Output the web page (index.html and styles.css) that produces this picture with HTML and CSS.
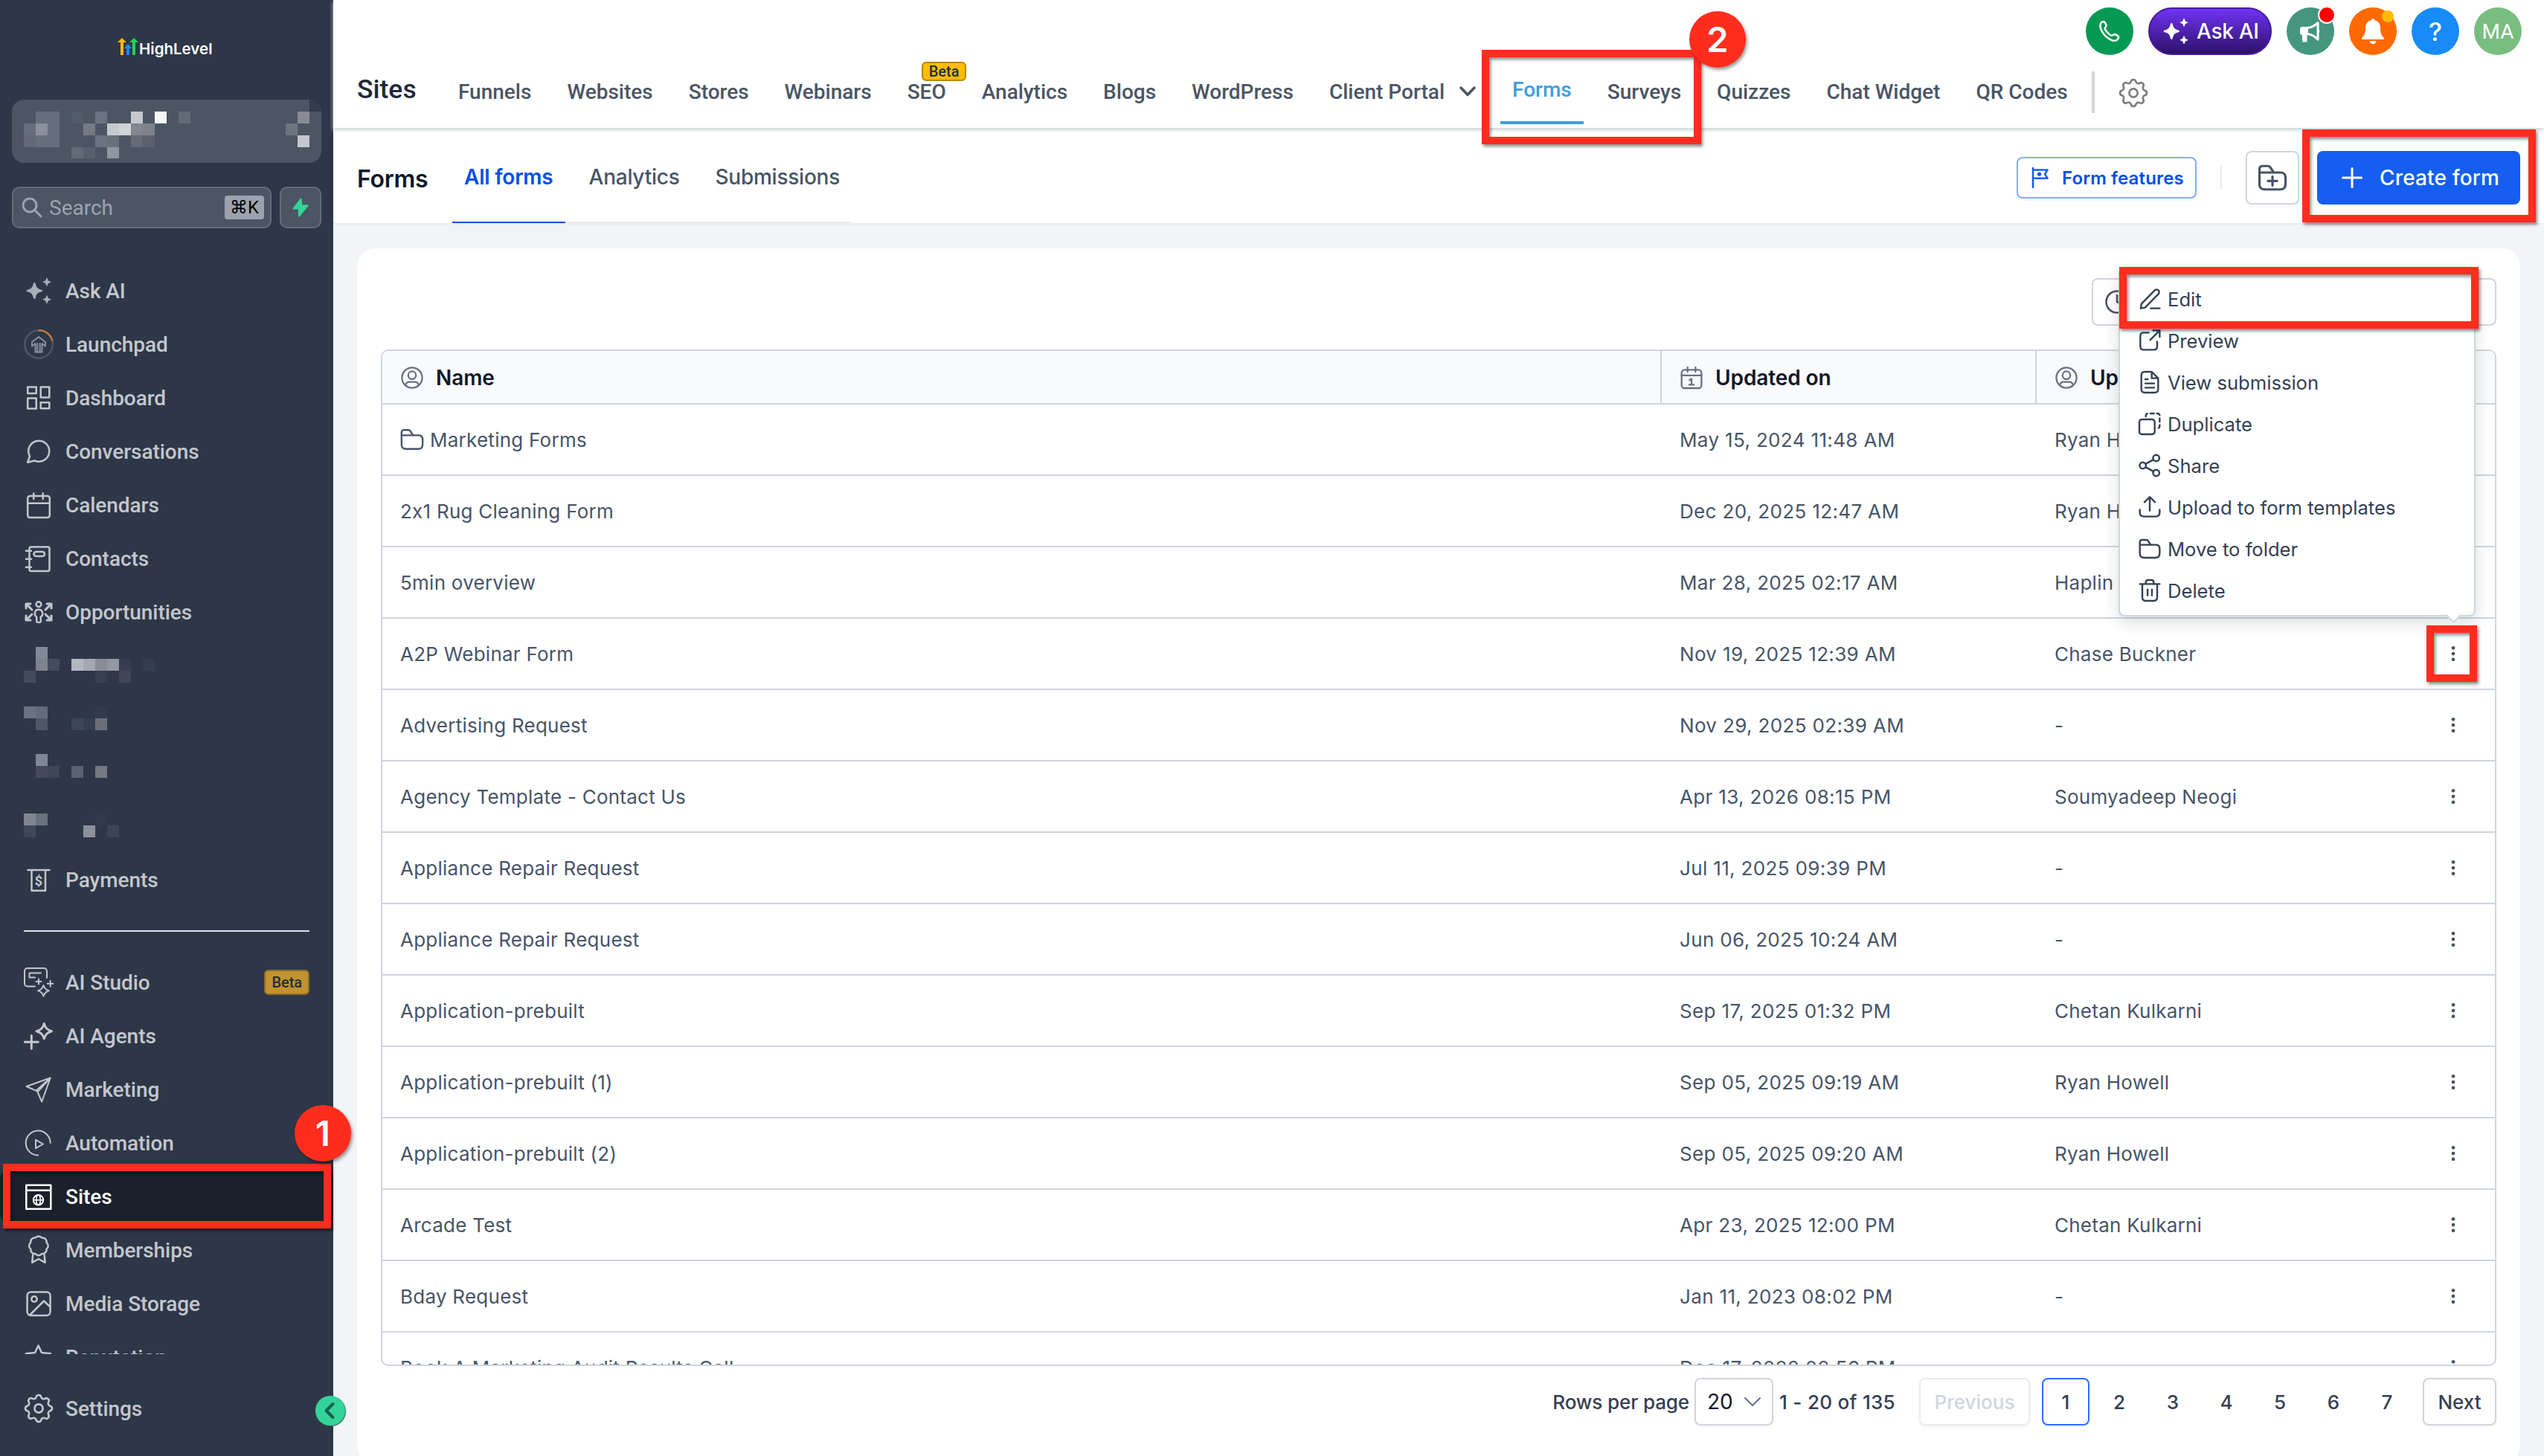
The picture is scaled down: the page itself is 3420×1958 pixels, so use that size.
FILE: index.html
```html
<!DOCTYPE html>
<html lang="en">
<head>
    <meta charset="UTF-8">
    <meta name="viewport" content="width=device-width, initial-scale=1.0">
    <title>Sites - Forms</title>
    <link rel="stylesheet" href="styles.css">
</head>
<body>
    <!-- Shared icons -->
    <svg class="icon-defs" width="0" height="0">
        <symbol id="i-gear" viewBox="0 0 24 24"><path d="M10.325 4.317c.426-1.756 2.924-1.756 3.35 0a1.724 1.724 0 002.573 1.066c1.543-.94 3.31.826 2.37 2.37a1.724 1.724 0 001.065 2.572c1.756.426 1.756 2.924 0 3.35a1.724 1.724 0 00-1.066 2.573c.94 1.543-.826 3.31-2.37 2.37a1.724 1.724 0 00-2.572 1.065c-.426 1.756-2.924 1.756-3.35 0a1.724 1.724 0 00-2.573-1.066c-1.543.94-3.31-.826-2.37-2.37a1.724 1.724 0 00-1.065-2.572c-1.756-.426-1.756-2.924 0-3.35a1.724 1.724 0 001.066-2.573c-.94-1.543.826-3.31 2.37-2.37.996.608 2.296.07 2.572-1.065z"/><circle cx="12" cy="12" r="2.8"/></symbol>
        <path id="i-star" d="M14.300 9c1 0 1.300.8 1.600 2 .9 4 2.600 6.300 7 7.400 1.300.3 2.100.6 2.100 1.600s-.8 1.300-2.100 1.600c-4.400 1.100-6.100 3.400-7 7.400-.3 1.200-.6 2-1.600 2s-1.300-.8-1.600-2c-.9-4-2.600-6.300-7-7.400-1.300-.3-2.100-.6-2.100-1.600s.8-1.300 2.100-1.600c4.400-1.100 6.100-3.400 7-7.400.3-1.200.6-2 1.600-2z"/>
        <symbol id="i-sparkles" viewBox="0 0 40 40">
            <use href="#i-star"/>
            <use href="#i-star" transform="translate(23.850 -1.700) scale(.5)"/>
            <use href="#i-star" transform="translate(23.850 21.700) scale(.5)"/>
        </symbol>
        <symbol id="i-folder" viewBox="0 0 24 24"><path d="M2 7.500V5.200A2.200 2.200 0 0 1 4.200 3h4.200c.9 0 1.600.4 2 1.200L13 8M2 8h15.800c1.500 0 2.300.2 3 .8.900.7 1.200 1.600 1.200 3.200v4.500c0 1.800-.3 2.800-1.100 3.500-.7.700-1.700 1-3.400 1H6.500c-1.700 0-2.700-.3-3.400-1C2.300 19.300 2 18.300 2 16.500z"/></symbol>
        <symbol id="i-user" viewBox="0 0 24 24"><circle cx="12" cy="12" r="10.200"/><circle cx="12" cy="9.500" r="3.900"/><path d="M5.300 19.300c.6-2 1.900-3.100 3.900-3.100h5.600c2 0 3.300 1.100 3.900 3.100"/></symbol>
        <symbol id="i-dots" viewBox="0 0 24 24"><circle cx="12" cy="5.800" r="1.900"/><circle cx="12" cy="12" r="1.900"/><circle cx="12" cy="18.200" r="1.900"/></symbol>
    </svg>

    <div class="app">
        <aside class="sidebar">
            <div class="logo">
                <svg width="28" height="24" viewBox="0 0 28 24">
                    <path fill="#ffbc00" d="M6 0l6 6H8v17H4V6H0z"/>
                    <path fill="#188bf6" d="M14 8l5.500 6H16v9h-4v-9H8.500z"/>
                    <path fill="#22d34f" d="M22 0l6 6h-4v17h-4V6h-4z"/>
                </svg>
                <span>HighLevel</span>
            </div>

            <!-- Account switcher, name obscured -->
            <div class="account">
                <svg width="416" height="85" viewBox="0 0 416 85">
                    <path fill="#333c4f" d="M400 0h16v16h-16z"/>
                    <g transform="translate(-16 0)">
                        <path fill="#666d7b" d="M48 16h32v48H32V32h16z"/>
                        <rect x="32" y="48" width="16" height="16" fill="#626875"/>
                        <rect x="48" y="32" width="16" height="16" fill="#8a919c"/>
                        <rect x="96" y="16" width="16" height="16" fill="#515c68"/>
                        <rect x="128" y="16" width="16" height="16" fill="#6b7380"/>
                        <rect x="176" y="16" width="16" height="16" fill="#c6c7cd"/>
                        <rect x="208" y="16" width="16" height="16" fill="#f5f6f8"/>
                        <rect x="240" y="16" width="16" height="16" fill="#646b77"/>
                        <rect x="400" y="16" width="16" height="16" fill="#868b93"/>
                        <rect x="112" y="32" width="16" height="16" fill="#767a82"/>
                        <rect x="144" y="32" width="16" height="16" fill="#c6c8cd"/>
                        <rect x="160" y="32" width="16" height="16" fill="#d0d2d5"/>
                        <rect x="176" y="32" width="16" height="16" fill="#84868f"/>
                        <rect x="192" y="32" width="16" height="16" fill="#7c848a"/>
                        <rect x="384" y="32" width="16" height="16" fill="#6d757e"/>
                        <rect x="128" y="48" width="16" height="16" fill="#6b7380"/>
                        <rect x="144" y="48" width="16" height="16" fill="#676f7b"/>
                        <rect x="176" y="48" width="16" height="16" fill="#636975"/>
                        <rect x="192" y="48" width="16" height="16" fill="#5a616d"/>
                        <rect x="400" y="48" width="16" height="16" fill="#c5c7cd"/>
                        <rect x="96" y="64" width="16" height="15" fill="#636975"/>
                        <rect x="112" y="64" width="16" height="15" fill="#585f6d"/>
                        <rect x="144" y="64" width="16" height="15" fill="#8f979f"/>
                    </g>
                </svg>
            </div>

            <div class="search-row">
                <div class="search">
                    <svg class="search-icon" width="28" height="28" viewBox="0 0 28 28"><circle cx="11" cy="11" r="9"/><path d="M17.500 17.500L26 26"/></svg>
                    <span class="search-label">Search</span>
                    <span class="kbd">⌘K</span>
                </div>
                <div class="bolt">
                    <svg width="22" height="26" viewBox="0 0 22 26"><path fill="#34d399" stroke="#34d399" stroke-width="2" stroke-linejoin="round" d="M11.500 1.500L1.500 14.500h7.500L9 24.500 20.500 10.500h-8z"/></svg>
                </div>
            </div>

            <nav class="menu">
                <a class="menu-item"><svg class="ic fill dim"><use href="#i-sparkles"/></svg>Ask AI</a>
                <a class="menu-item"><svg class="ic" viewBox="0 0 40 40"><circle cx="20" cy="20" r="18.700" stroke="#4b5563"/><path stroke="#c0763a" d="M20 1.300A18.700 18.700 0 0 1 38.300 14.500"/><path stroke="#8a919d" stroke-width="2" d="M20 10l9 7v5.500L24.500 19v11.500h-9V19L11 22.500V17zM18.300 19v11M21.700 19v11"/></svg>Launchpad</a>
                <a class="menu-item"><svg class="ic" viewBox="0 0 40 40"><path d="M5.200 5.600h11.600v8.400H5.200zM22.700 5.600h11.600v14H22.700zM5.200 20.600h11.600v13.800H5.200zM22.700 26.300h11.600v8H22.700z"/></svg>Dashboard</a>
                <a class="menu-item"><svg class="ic" viewBox="0 0 40 40"><path d="M8 26.500A14 14 0 1 1 14.500 32.500L5.200 34.700z"/></svg>Conversations</a>
                <a class="menu-item"><svg class="ic" viewBox="0 0 40 40"><rect x="5.200" y="8" width="29.600" height="29" rx="3"/><path d="M5 17.700h30M13.300 4.500v7.500M25.700 4.500v7.500"/></svg>Calendars</a>
                <a class="menu-item"><svg class="ic" viewBox="0 0 40 40"><rect x="7.500" y="4.500" width="27" height="32.500" rx="2.500"/><path d="M3 9.700h7M3 20.700h7M3 31.700h7"/><rect x="13.500" y="11" width="14.500" height="6" rx="3"/></svg>Contacts</a>
                <a class="menu-item"><svg class="ic" viewBox="0 0 40 40"><circle cx="20" cy="9.700" r="3.400"/><path d="M17.200 33V26.500c-2-1-2.600-3-2.400-5.200.3-2.800 2.200-4.500 5.200-4.500s4.900 1.700 5.200 4.500c.2 2.200-.4 4.200-2.400 5.200V33c0 1.200-5.600 1.200-5.600 0z"/><path d="M11 17L4 10M3 15V9h6M29 17l7-7M37 15V9h-6M11 23l-7 7M3 25v6h6M29 23l7 7M37 25v6h-6" stroke-width="3"/></svg>Opportunities</a>

                <!-- Obscured entries -->
                <svg class="masked" width="448" height="288" viewBox="0 859 448 288">
                    <rect x="48" y="870" width="16" height="16" fill="#828a97"/>
                    <rect x="48" y="886" width="16" height="16" fill="#7c828e"/>
                    <rect x="64" y="886" width="16" height="16" fill="#434c5c"/>
                    <rect x="96" y="886" width="16" height="16" fill="#b3b6c0"/>
                    <rect x="112" y="886" width="16" height="16" fill="#a4a8b1"/>
                    <rect x="128" y="886" width="16" height="16" fill="#888c94"/>
                    <rect x="144" y="886" width="16" height="16" fill="#94979f"/>
                    <rect x="160" y="886" width="16" height="16" fill="#353e50"/>
                    <rect x="192" y="886" width="16" height="16" fill="#343d4f"/>
                    <rect x="32" y="902" width="16" height="16" fill="#434c5b"/>
                    <rect x="128" y="902" width="16" height="16" fill="#37404f"/>
                    <rect x="160" y="902" width="16" height="16" fill="#3f4555"/>
                    <rect x="32" y="950" width="16" height="16" fill="#6b7280"/>
                    <rect x="48" y="950" width="16" height="16" fill="#646b78"/>
                    <rect x="128" y="950" width="16" height="16" fill="#323b4d"/>
                    <rect x="48" y="966" width="16" height="16" fill="#4f5664"/>
                    <rect x="96" y="966" width="16" height="16" fill="#3d4658"/>
                    <rect x="112" y="966" width="16" height="16" fill="#323f50"/>
                    <rect x="128" y="966" width="16" height="16" fill="#6b6e79"/>
                    <rect x="48" y="1014" width="16" height="16" fill="#808895"/>
                    <rect x="48" y="1030" width="16" height="16" fill="#444a5b"/>
                    <rect x="64" y="1030" width="16" height="16" fill="#3e4756"/>
                    <rect x="96" y="1030" width="16" height="16" fill="#5a6170"/>
                    <rect x="128" y="1030" width="16" height="16" fill="#71787f"/>
                    <rect x="32" y="1094" width="16" height="16" fill="#808691"/>
                    <rect x="48" y="1094" width="16" height="16" fill="#67727d"/>
                    <rect x="128" y="1094" width="16" height="16" fill="#313a4c"/>
                    <rect x="32" y="1110" width="16" height="16" fill="#3f4858"/>
                    <rect x="112" y="1110" width="16" height="16" fill="#8c9099"/>
                    <rect x="144" y="1110" width="16" height="16" fill="#3c4456"/>
                </svg>

                <a class="menu-item"><svg class="ic" viewBox="0 0 40 40"><path d="M5.500 7h29M10.500 7v27.700h18.500V7"/><text class="dollar" x="19.800" y="28" text-anchor="middle">$</text></svg>Payments</a>
                <hr class="divider">
                <a class="menu-item"><svg class="ic thin" viewBox="0 0 40 40"><path d="M15 25.500H5a4 4 0 0 1-4-4V5a4 4 0 0 1 4-4h22a4 4 0 0 1 4 4v9M23 7.500H7.500v6H15M20 15.500v7M16.500 19h7M35.700 17.700v8M31.700 21.700h8M26.500 24c1.300 4.300 3 6 7.300 7.300-4.300 1.300-6 3-7.300 7.300-1.300-4.300-3-6-7.300-7.300 4.300-1.300 6-3 7.300-7.300z"/></svg>AI Studio<span class="beta beta-dim">Beta</span></a>
                <a class="menu-item"><svg class="ic" viewBox="0 0 40 40"><path d="M27.300 3.500c1.800 6.100 4.100 8.400 10.200 10.200-6.100 1.800-8.400 4.100-10.200 10.200-1.800-6.100-4.100-8.400-10.200-10.200 6.100-1.800 8.400-4.100 10.200-10.200zM10.300 19.500v17.800M1.300 28.300h18" stroke-width="3"/></svg>AI Agents</a>
                <a class="menu-item"><svg class="ic" viewBox="0 0 40 40"><path stroke-width="2" d="M35.700 4.500L3.500 16 18 22.300l6.200 14.200zM35.700 4.500L17.300 21M35.700 4.500L19.300 22.500"/></svg>Marketing</a>
                <a class="menu-item"><svg class="ic thin" viewBox="0 0 40 40"><path d="M35.700 19.700A16.500 16.500 0 1 0 19.300 36.600"/><path d="M16 15.800v11.400L26 21.500z"/></svg>Automation</a>
                <a class="menu-item active"><svg class="ic" viewBox="0 0 40 40"><path d="M3.300 4.700h33v32h-33zM3.300 11.700h33"/><circle cx="19.500" cy="24.700" r="6.700" stroke-width="2"/><ellipse cx="19.500" cy="24.700" rx="2.800" ry="6.700" stroke-width="1.600"/><path stroke-width="1.600" d="M13 24.700h13"/></svg>Sites</a>
                <a class="menu-item"><svg class="ic" viewBox="0 0 40 40"><path d="M30.600 9.900A5.600 5.600 0 0 1 30.600 18.700A5.600 5.600 0 0 1 24.300 25A5.600 5.600 0 0 1 15.500 25A5.600 5.600 0 0 1 9.200 18.700A5.600 5.600 0 0 1 9.200 9.900A5.600 5.600 0 0 1 15.500 3.600A5.600 5.600 0 0 1 24.300 3.600A5.600 5.600 0 0 1 30.600 9.900z"/><path d="M12.200 26.500L11.200 36.800 19.900 32l8.700 4.800-1-10.300"/></svg>Memberships</a>
                <a class="menu-item"><svg class="ic" viewBox="0 0 40 40"><rect x="4.600" y="4.500" width="31" height="31.500" rx="5"/><circle cx="14" cy="14" r="3.700"/><path d="M8.500 35L27 16.500l8.500 8"/></svg>Media Storage</a>
                <a class="menu-item"><svg class="ic" viewBox="0 0 40 40"><path d="M19.500 4.500L24 14l12 1.200-9 8 2.600 12-10.100-6.200-10.100 6.200 2.600-12-9-8L15 14z"/></svg>Reputation</a>
            </nav>

            <a class="menu-item settings"><svg class="ic gear"><use href="#i-gear"/></svg>Settings</a>
            <button class="collapse"><svg width="16" height="24" viewBox="0 0 16 24"><path d="M12.500 3L3.500 12l9 9"/></svg></button>
        </aside>

        <main class="main">
            <header class="topbar">
                <h1 class="topbar-title">Sites</h1>
                <nav class="topnav">
                    <a>Funnels</a>
                    <a>Websites</a>
                    <a>Stores</a>
                    <a>Webinars</a>
                    <a class="has-badge">SEO<span class="beta">Beta</span></a>
                    <a>Analytics</a>
                    <a>Blogs</a>
                    <a>WordPress</a>
                    <a>Client Portal<svg class="chev" width="24" height="16" viewBox="0 0 24 16"><path d="M3 3l9 9.500L21 3"/></svg></a>
                    <a class="current">Forms</a>
                    <a>Surveys</a>
                    <a>Quizzes</a>
                    <a>Chat Widget</a>
                    <a>QR Codes</a>
                </nav>
                <span class="topnav-sep"></span>
                <svg class="topnav-gear"><use href="#i-gear"/></svg>

                <div class="actions">
                    <span class="round phone"><svg width="32" height="32" viewBox="0 0 32 32"><path d="M4.500 4.800c1-1.200 2-2.100 3.500-1.800 1.800.4 3 3.500 3.500 5 .5 1.800-1.600 2.700-1.800 4.200-.2 2.200 6.200 9.300 9 9.600 1.700.2 2.800-2 4.600-1.500 1.500.5 4.500 2.200 4.800 3.800.3 1.500-1 2.700-2.200 3.600-2.500 1.700-6.500.8-9-.6C10.500 23.500 6 18 4 12.300c-.8-2.500-1-5.300.5-7.500z"/></svg></span>
                    <span class="ask-ai"><svg width="40" height="40"><use href="#i-sparkles"/></svg>Ask AI</span>
                    <span class="round mega"><svg width="32" height="32" viewBox="0 0 32 32"><path fill="#fff" d="M5 10h8v11h-1.500v8a1.500 1.500 0 0 1-1.500 1.500H6.500A1.500 1.500 0 0 1 5 29v-8a3 3 0 0 1-3-3v-5a3 3 0 0 1 3-3z"/><path fill="none" stroke="#fff" stroke-width="3" stroke-linejoin="round" d="M12.500 11.300C18 11 22.500 8 26 4.500v22.800C22.500 23.500 18 20.300 12.500 19.800"/><path fill="#fff" d="M26 12.500c3 .5 3 6 0 6.500z"/></svg><i class="dot dot-red"></i></span>
                    <span class="round bell"><svg width="32" height="36" viewBox="0 0 32 36"><path fill="#fff" d="M16 1a2.500 2.500 0 0 1 2.500 2.300c4.500 1.200 7.500 5 7.500 9.700 0 6.500 1 10.500 4.500 13.500.9.800.6 2.500-.8 2.500H2.300c-1.400 0-1.700-1.700-.8-2.500C5 23.500 6 19.500 6 13c0-4.700 3-8.500 7.500-9.700A2.500 2.500 0 0 1 16 1zM11.500 31h9a4.500 4 0 0 1-9 0z"/></svg><i class="dot dot-yellow"></i></span>
                    <span class="round help">?</span>
                    <span class="round avatar">MA</span>
                </div>
            </header>

            <section class="subbar">
                <h2 class="subbar-title">Forms</h2>
                <div class="tabs">
                    <a class="tab tab-on">All forms</a>
                    <a class="tab">Analytics</a>
                    <a class="tab">Submissions</a>
                </div>
                <div class="subbar-actions">
                    <button class="btn-features"><svg width="24" height="28" viewBox="0 0 24 28"><path fill="none" stroke="#155eef" stroke-width="2.500" d="M2 0v27M2 3.500h19.500l-3.500 5.700 3.500 5.500H2"/><circle cx="10.500" cy="9.200" r="2.700" fill="#155eef"/></svg>Form features</button>
                    <span class="vsep"></span>
                    <button class="btn-folder"><svg width="42" height="42" viewBox="0 0 24 24"><use href="#i-folder"/><path d="M12 11v7M8.500 14.500h7"/></svg></button>
                    <button class="btn-create"><svg width="28" height="28" viewBox="0 0 28 28"><path d="M14 1.500v25M1.500 14h25"/></svg>Create form</button>
                </div>
            </section>

            <section class="card">
                <div class="toolbar">
                    <div class="toolbox"><svg width="34" height="34" viewBox="0 0 34 34"><circle cx="17" cy="17" r="14.500"/><path d="M17 8v9l6 3"/></svg></div>
                </div>

                <div class="table">
                    <div class="row head">
                        <div class="cell"><svg class="hic"><use href="#i-user"/></svg>Name</div>
                        <div class="cell"><svg class="hic" viewBox="0 0 24 24"><rect x="2" y="4" width="20" height="18.500" rx="3"/><path d="M2 9.700h20M8 1.500v4.500M16 1.500v4.500M10 14.300l2-1.200v6M9.700 19.100h4.600"/></svg>Updated on</div>
                        <div class="cell"><svg class="hic"><use href="#i-user"/></svg>Updated by</div>
                        <div class="cell"></div>
                    </div>
                    <div class="row">
                        <div class="cell"><svg class="fic"><use href="#i-folder"/></svg>Marketing Forms</div>
                        <div class="cell date">May 15, 2024 11:48 AM</div><div class="cell">Ryan Howell</div>
                        <div class="cell more"><svg><use href="#i-dots"/></svg></div>
                    </div>
                    <div class="row">
                        <div class="cell">2x1 Rug Cleaning Form</div><div class="cell date">Dec 20, 2025 12:47 AM</div><div class="cell">Ryan Howell</div>
                        <div class="cell more"><svg><use href="#i-dots"/></svg></div>
                    </div>
                    <div class="row">
                        <div class="cell">5min overview</div><div class="cell date">Mar 28, 2025 02:17 AM</div><div class="cell">Haplin</div>
                        <div class="cell more"><svg><use href="#i-dots"/></svg></div>
                    </div>
                    <div class="row">
                        <div class="cell">A2P Webinar Form</div><div class="cell date">Nov 19, 2025 12:39 AM</div><div class="cell">Chase Buckner</div>
                        <div class="cell more"><svg><use href="#i-dots"/></svg></div>
                    </div>
                    <div class="row">
                        <div class="cell">Advertising Request</div><div class="cell date">Nov 29, 2025 02:39 AM</div><div class="cell">-</div>
                        <div class="cell more"><svg><use href="#i-dots"/></svg></div>
                    </div>
                    <div class="row">
                        <div class="cell">Agency Template - Contact Us</div><div class="cell date">Apr 13, 2026 08:15 PM</div><div class="cell">Soumyadeep Neogi</div>
                        <div class="cell more"><svg><use href="#i-dots"/></svg></div>
                    </div>
                    <div class="row">
                        <div class="cell">Appliance Repair Request</div><div class="cell date">Jul 11, 2025 09:39 PM</div><div class="cell">-</div>
                        <div class="cell more"><svg><use href="#i-dots"/></svg></div>
                    </div>
                    <div class="row">
                        <div class="cell">Appliance Repair Request</div><div class="cell date">Jun 06, 2025 10:24 AM</div><div class="cell">-</div>
                        <div class="cell more"><svg><use href="#i-dots"/></svg></div>
                    </div>
                    <div class="row">
                        <div class="cell">Application-prebuilt</div><div class="cell date">Sep 17, 2025 01:32 PM</div><div class="cell">Chetan Kulkarni</div>
                        <div class="cell more"><svg><use href="#i-dots"/></svg></div>
                    </div>
                    <div class="row">
                        <div class="cell">Application-prebuilt (1)</div><div class="cell date">Sep 05, 2025 09:19 AM</div><div class="cell">Ryan Howell</div>
                        <div class="cell more"><svg><use href="#i-dots"/></svg></div>
                    </div>
                    <div class="row">
                        <div class="cell">Application-prebuilt (2)</div><div class="cell date">Sep 05, 2025 09:20 AM</div><div class="cell">Ryan Howell</div>
                        <div class="cell more"><svg><use href="#i-dots"/></svg></div>
                    </div>
                    <div class="row">
                        <div class="cell">Arcade Test</div><div class="cell date">Apr 23, 2025 12:00 PM</div><div class="cell">Chetan Kulkarni</div>
                        <div class="cell more"><svg><use href="#i-dots"/></svg></div>
                    </div>
                    <div class="row">
                        <div class="cell">Bday Request</div><div class="cell date">Jan 11, 2023 08:02 PM</div><div class="cell">-</div>
                        <div class="cell more"><svg><use href="#i-dots"/></svg></div>
                    </div>
                    <div class="row">
                        <div class="cell">Book A Marketing Audit Results Call</div><div class="cell date">Dec 17, 2022 02:56 PM</div><div class="cell">-</div>
                        <div class="cell more"><svg><use href="#i-dots"/></svg></div>
                    </div>
                </div>

                <div class="pager">
                    <span class="pager-label">Rows per page</span>
                    <span class="page-size">20<svg width="24" height="16" viewBox="0 0 24 16"><path d="M2 3l10 10L22 3"/></svg></span>
                    <span class="range">1 - 20 of 135</span>
                    <button class="pg prev">Previous</button>
                    <button class="num on">1</button>
                    <button class="num">2</button>
                    <button class="num">3</button>
                    <button class="num">4</button>
                    <button class="num">5</button>
                    <button class="num">6</button>
                    <button class="num">7</button>
                    <button class="pg next">Next</button>
                </div>
            </section>
        </main>
    </div>

    <!-- Row actions popover -->
    <div class="popover">
        <a><svg viewBox="0 0 24 24"><path d="M13 21.500h9M3 21.500l.6-4.500L17 3.300a2.600 2.600 0 0 1 3.700 3.700L7.300 20.700z"/></svg>Edit</a>
        <a><svg viewBox="0 0 24 24"><path d="M11 4H6C3.500 4 2.500 5 2.500 7.500v10.300c0 2.500 1 3.500 3.500 3.500h10c2.500 0 3.500-1 3.500-3.500V13M15.500 1.800H22v6.500M22 1.800L12.500 11.300"/></svg>Preview</a>
        <a><svg viewBox="0 0 24 24"><path d="M14 1.500H7.500C4.500 1.500 3.500 2.500 3.500 5v14c0 2.500 1 3.500 4 3.500h9c3 0 4-1 4-3.500V8zM14 1.500V8h6.500M7.500 9h2.500M7.500 13.200h9M7.500 17.500h9"/></svg>View submission</a>
        <a><svg viewBox="0 0 24 24"><rect x="1.500" y="7.500" width="15.500" height="15" rx="2.500"/><path stroke-dasharray="3.600 3" d="M8 4.500V4c0-1.500.8-2.500 2.500-2.500h9c1.700 0 2.500.8 2.500 2.500v10c0 1.500-.8 2.500-2.500 2.500"/></svg>Duplicate</a>
        <a><svg viewBox="0 0 24 24"><circle cx="18.500" cy="4.500" r="3.200"/><circle cx="5" cy="12" r="3.200"/><circle cx="18.500" cy="19.500" r="3.200"/><path d="M7.800 10.400l7.900-4.300M7.800 13.600l7.900 4.300"/></svg>Share</a>
        <a><svg viewBox="0 0 24 24"><path d="M2 14.500v3c0 2.700 1.200 4 4 4h12c2.800 0 4-1.300 4-4v-3M12 15.500V2M6.700 7L12 1.700 17.300 7"/></svg>Upload to form templates</a>
        <a><svg><use href="#i-folder"/></svg>Move to folder</a>
        <a><svg viewBox="0 0 24 24"><path d="M2 5.500h20M4.500 5.500v13.300c0 2.500 1 3.700 3.500 3.700h8c2.500 0 3.500-1.200 3.500-3.700V5.500M8 5.300V4c0-1.700.8-2.500 2.500-2.500h3c1.700 0 2.500.8 2.500 2.500v1.300M9.800 11v6M14.200 11v6"/></svg>Delete</a>
        <span class="popover-arrow"></span>
    </div>

    <!-- Step callouts -->
    <div class="callout callout-sites"></div>
    <div class="callout callout-forms"></div>
    <div class="callout callout-create"></div>
    <div class="callout callout-edit"></div>
    <div class="callout callout-more"></div>
    <span class="step step-1">1</span>
    <span class="step step-2">2</span>
</body>
</html>
```
FILE: styles.css
```css
* {
    box-sizing: border-box;
}
body {
    margin: 0;
    width: 3420px;
    height: 1958px;
    overflow: hidden;
    position: relative;
    font-family: Inter, "Liberation Sans", sans-serif;
    background: #f2f4f7;
}
h1, h2 {
    margin: 0;
    font-weight: 500;
}
button {
    font: inherit;
    padding: 0;
    background: #fff;
}
svg {
    flex: none;
    fill: none;
    stroke-linecap: round;
    stroke-linejoin: round;
}
.icon-defs {
    position: absolute;
    fill: inherit;
}
#i-star {
    fill: inherit;
}
.app {
    display: flex;
    height: 1958px;
}

/* Sidebar */
.sidebar {
    position: relative;
    width: 448px;
    flex: none;
    display: flex;
    flex-direction: column;
    background: #2d3748;
    font-family: Roboto, sans-serif;
}
.logo {
    height: 134px;
    padding: 51px 0 0 158px;
    display: flex;
    align-items: flex-start;
    color: #fff;
    font: 600 20.5px/30px Inter, sans-serif;
}
.logo span {
    margin-left: 1px;
}
.account {
    margin: 0 16px;
    height: 85px;
    border-radius: 16px;
    background: #4c5563;
    overflow: hidden;
}
.account svg {
    display: block;
}
.search-row {
    display: flex;
    gap: 11px;
    margin: 32px 16px 48px;
    height: 56px;
}
.search {
    flex: 1;
    display: flex;
    align-items: center;
    padding: 0 8px 0 11px;
    border: 2px solid #626c7a;
    border-radius: 10px;
    background: #4c5563;
    color: #9ca3af;
    font-size: 28px;
}
.search-icon {
    stroke: #9ca3af;
    stroke-width: 3;
}
.search-label {
    margin-left: 9px;
    flex: 1;
}
.kbd {
    width: 53px;
    height: 32px;
    border-radius: 4px;
    background: #9ca3af;
    color: #000;
    font-size: 24px;
    line-height: 32px;
    text-align: center;
}
.bolt {
    width: 56px;
    display: flex;
    align-items: center;
    justify-content: center;
    border: 2px solid #626c7a;
    border-radius: 10px;
    background: #4c5563;
}
.menu {
    height: 1466px;
    overflow: hidden;
}
.menu-item {
    height: 72px;
    padding: 0 32px;
    display: flex;
    align-items: center;
    gap: 16px;
    color: #c4c6cc;
    font-size: 28px;
    font-weight: 500;
    letter-spacing: -0.05px;
}
.ic {
    width: 40px;
    height: 40px;
    stroke: currentColor;
    stroke-width: 2.5;
}
.ic.thin {
    stroke-width: 2;
}
.ic.fill {
    fill: currentColor;
    stroke: none;
}
.ic.dim {
    color: #a9adb8;
}
.ic.gear {
    width: 48px;
    height: 48px;
    margin: 0 -4px;
    stroke-width: 1.3;
}
.dollar {
    font: 700 18px Roboto, sans-serif;
    fill: currentColor;
    stroke: none;
}
.menu-item.active {
    background: #1a202c;
    border-radius: 12px;
    color: #fff;
}
.masked {
    display: block;
}
.divider {
    margin: 32px;
    height: 2px;
    border: 0;
    background: #e2e4e8;
}
.beta {
    padding: 0 8px;
    height: 26px;
    border: 2px solid #b8860b;
    border-radius: 6px;
    background: #ffbc00;
    color: #1d2f3f;
    font: 500 20px/22px Roboto, sans-serif;
}
.beta-dim {
    margin-left: auto;
    height: 34px;
    line-height: 31px;
    border-color: #8c6c2a;
    background: #c1922f;
}
.settings {
    margin-top: 37px;
}
.collapse {
    position: absolute;
    left: 424px;
    top: 1877px;
    width: 40px;
    height: 40px;
    border: 0;
    border-radius: 50%;
    background: #34d399;
    box-shadow: 1px 1px 1px #2c6e5a;
    display: flex;
    align-items: center;
    justify-content: center;
    z-index: 2;
}
.collapse svg {
    margin-right: 3px;
    stroke: #10614a;
    stroke-width: 4;
}

/* Top bar */
.main {
    flex: 1;
    display: flex;
    flex-direction: column;
}
.topbar {
    position: relative;
    z-index: 1;
    height: 172px;
    padding: 74px 0 0 32px;
    display: flex;
    background: #fff;
    box-shadow: 0 3px 5px #cdd5d8;
    font-family: Roboto, sans-serif;
}
.topbar-title {
    width: 112px;
    margin-top: 20px;
    color: #1f2937;
    font-size: 35.500px;
    line-height: 52px;
}
.topnav {
    display: flex;
}
.topnav a {
    position: relative;
    margin: 0 24px;
    height: 98px;
    display: flex;
    align-items: center;
    color: #4b5563;
    font-size: 28px;
    font-weight: 500;
    letter-spacing: 0;
}
.topnav .current {
    margin: 0 8px;
    padding: 4px 16px 0;
    height: 93px;
    color: #3b9fdc;
    border-bottom: 4px solid #3b9fdc;
}
.topnav .beta {
    position: absolute;
    left: 19px;
    top: 9px;
}
.chev {
    margin-left: 19px;
    stroke: #4b5563;
    stroke-width: 3.5;
}
.topnav-sep {
    width: 4px;
    height: 56px;
    margin: 22px 28px 0 8px;
    background: #d5d5dc;
}
.topnav-gear {
    width: 48px;
    height: 48px;
    margin-top: 27px;
    stroke: #7d7d7d;
    stroke-width: 1.3;
}
.actions {
    position: absolute;
    top: 10px;
    right: 30px;
    display: flex;
    gap: 20px;
}
.round {
    position: relative;
    width: 64px;
    height: 64px;
    border-radius: 50%;
    display: flex;
    align-items: center;
    justify-content: center;
    color: #fff;
}
.phone {
    background: #049a53;
}
.phone svg {
    stroke: #fff;
    stroke-width: 2.5;
}
.ask-ai {
    width: 166px;
    height: 64px;
    padding-left: 15px;
    display: flex;
    align-items: center;
    gap: 8px;
    border: 2px solid #441aa0;
    border-radius: 32px;
    background: linear-gradient(#7033f5, #2d1166);
    color: #fff;
    font: 500 28px Inter, sans-serif;
    letter-spacing: -0.3px;
    white-space: nowrap;
}
.ask-ai svg {
    fill: #fff;
}
.mega {
    background: #45967e;
}
.bell {
    background: #ff6900;
}
.help {
    background: #188bf6;
    font: 500 34px Inter, sans-serif;
}
.avatar {
    background: #79bd7f;
    font-size: 28px;
}
.dot {
    position: absolute;
    border-radius: 50%;
}
.dot-red {
    left: 42px;
    top: -2px;
    width: 24px;
    height: 24px;
    border: 2px solid #fff;
    background: #f00;
}
.dot-yellow {
    left: 44px;
    top: 4px;
    width: 16px;
    height: 16px;
    background: #ffbc00;
}

/* Sub header */
.subbar {
    height: 130px;
    padding: 0 32px;
    display: flex;
    background: #fff;
    border-bottom: 2px solid #eaecf0;
}
.subbar-title {
    width: 128px;
    padding-top: 8px;
    color: #101828;
    font-size: 32px;
    font-weight: 600;
    line-height: 122px;
    letter-spacing: -0.3px;
}
.tabs {
    display: flex;
    gap: 16px;
    border-bottom: 2px solid #eaecf0;
}
.tab {
    height: 128px;
    padding: 0 16px;
    color: #475467;
    font-size: 28px;
    font-weight: 500;
    line-height: 132px;
    letter-spacing: -0.25px;
}
.tab-on {
    color: #004eeb;
    border-bottom: 2px solid #004eeb;
    font-weight: 600;
    letter-spacing: -0.2px;
}
.subbar-actions {
    margin-left: auto;
    display: flex;
    align-items: center;
    padding-top: 6px;
}
.btn-features {
    width: 242px;
    height: 56px;
    padding-left: 18px;
    display: flex;
    align-items: center;
    gap: 17px;
    border: 2px solid #84adff;
    border-radius: 8px;
    box-shadow: 0 2px 4px #1018280d;
    color: #004eeb;
    font-size: 24px;
    font-weight: 600;
    letter-spacing: 0.15px;
    white-space: nowrap;
}
.vsep {
    width: 2px;
    height: 32px;
    margin: 0 32px;
    background: #eaecf0;
}
.btn-folder {
    width: 72px;
    height: 72px;
    margin-right: 24px;
    display: flex;
    align-items: center;
    justify-content: center;
    border: 2px solid #d0d5dd;
    border-radius: 8px;
    box-shadow: 0 2px 4px #1018280d;
}
.btn-folder svg {
    stroke: #475467;
    stroke-width: 1.8;
}
.btn-create {
    width: 273px;
    height: 72px;
    padding-left: 33px;
    display: flex;
    align-items: center;
    gap: 23px;
    border: 0;
    border-radius: 8px;
    background: #155eef;
    color: #fff;
    font-size: 28px;
    font-weight: 500;
    letter-spacing: 0.15px;
    white-space: nowrap;
}
.btn-create svg {
    stroke: #fff;
    stroke-width: 3;
}

/* Forms list */
.card {
    flex: none;
    width: 2908px;
    height: 1634px;
    margin: 32px 0 0 32px;
    padding: 40px 32px;
    border-radius: 24px;
    background: #fff;
}
.toolbar {
    display: flex;
    justify-content: flex-end;
    margin-bottom: 32px;
}
.toolbox {
    width: 544px;
    height: 64px;
    padding-left: 15px;
    display: flex;
    align-items: center;
    border: 2px solid #d0d5dd;
    border-radius: 8px;
}
.toolbox svg {
    stroke: #475467;
    stroke-width: 2.5;
}
.table {
    height: 1367px;
    overflow: hidden;
    border: 2px solid #d0d5dd;
    border-radius: 10px;
    font-size: 26px;
    color: #475467;
    letter-spacing: 0.25px;
}
.row {
    display: grid;
    grid-template-columns: 1720px 504px 1fr 112px;
    height: 96px;
    border-bottom: 2px solid #d0d5dd;
}
.cell {
    display: flex;
    align-items: center;
    padding-left: 24px;
}
.cell.date {
    letter-spacing: 0.35px;
}
.head {
    height: 72px;
    background: #f9fafb;
    color: #101828;
    font-size: 28px;
    font-weight: 600;
    letter-spacing: -0.1px;
}
.head .cell {
    padding-top: 2px;
}
.head .cell + .cell:not(:last-child) {
    margin-left: -2px;
    border-left: 2px solid #d0d5dd;
}
.hic {
    width: 32px;
    height: 32px;
    margin-right: 16px;
    stroke: #667085;
    stroke-width: 1.7;
}
.fic {
    width: 34px;
    height: 34px;
    margin: 0 7px 0 -1px;
    stroke: #475467;
    stroke-width: 1.7;
}
.more {
    padding: 0;
    justify-content: center;
}
.more svg {
    width: 30px;
    height: 30px;
    fill: #475467;
}

/* Pagination */
.pager {
    margin-top: 16px;
    display: flex;
    align-items: center;
    justify-content: flex-end;
    color: #344054;
    font-size: 26px;
    font-weight: 500;
}
.pager-label {
    letter-spacing: -0.1px;
}
.page-size {
    width: 106px;
    height: 64px;
    margin: 0 8px 0 7px;
    padding-left: 15px;
    display: flex;
    align-items: center;
    gap: 14px;
    border: 2px solid #d0d5dd;
    border-radius: 8px;
    box-shadow: 0 2px 4px #1018280d;
    color: #101828;
    font-size: 28px;
    font-weight: 400;
}
.page-size svg {
    stroke: #667085;
    stroke-width: 2;
}
.range {
    width: 188px;
    letter-spacing: 0.3px;
}
.pg {
    height: 64px;
    border: 2px solid #d0d5dd;
    border-radius: 8px;
    box-shadow: 0 2px 4px #1018280d;
}
.prev {
    width: 149px;
    margin-right: 16px;
    border-color: #eaecf0;
    color: #d0d5dd;
}
.num {
    width: 64px;
    height: 64px;
    margin-right: 8px;
    border: 0;
    border-radius: 8px;
    color: #344054;
}
.num.on {
    border: 2px solid #2970ff;
}
.next {
    width: 99px;
    margin-left: 8px;
    color: #344054;
}

/* Popover menu */
.popover {
    position: absolute;
    left: 2848px;
    top: 360px;
    width: 480px;
    height: 469px;
    padding: 12px 0 0 24px;
    border: 2px solid #d0d5dd;
    border-radius: 8px;
    background: #fff;
    box-shadow: 0 8px 20px #10182826;
    color: #344054;
    font-size: 25.600px;
}
.popover a {
    height: 56px;
    display: flex;
    align-items: center;
    gap: 8px;
}
.popover svg {
    width: 32px;
    height: 32px;
    stroke: #344054;
    stroke-width: 1.8;
}
.popover-arrow {
    position: absolute;
    left: 441px;
    bottom: -8px;
    width: 15px;
    height: 15px;
    background: #fff;
    border: solid #d0d5dd;
    border-width: 0 2px 2px 0;
    transform: rotate(45deg);
}

/* Callouts */
.callout {
    position: absolute;
    z-index: 3;
    border: 10px solid #ff2d1d;
    box-shadow: 2px 3px 4px #0007, inset 2px 3px 4px #0007;
}
.callout-sites {
    left: 4px;
    top: 1565px;
    width: 441px;
    height: 87px;
}
.callout-forms {
    left: 1992px;
    top: 67px;
    width: 295px;
    height: 127px;
}
.callout-create {
    left: 3095px;
    top: 174px;
    width: 314px;
    height: 125px;
}
.callout-edit {
    left: 2849px;
    top: 359px;
    width: 483px;
    height: 83px;
}
.callout-more {
    left: 3262px;
    top: 841px;
    width: 68px;
    height: 76px;
}
.step {
    position: absolute;
    z-index: 4;
    width: 76px;
    height: 76px;
    border-radius: 50%;
    background: #ff2d1d;
    box-shadow: 2px 3px 4px #0006;
    color: #fff;
    font: 600 47px/76px Inter, sans-serif;
    text-align: center;
}
.step-1 {
    left: 396px;
    top: 1486px;
}
.step-2 {
    left: 2271px;
    top: 15px;
}
```
